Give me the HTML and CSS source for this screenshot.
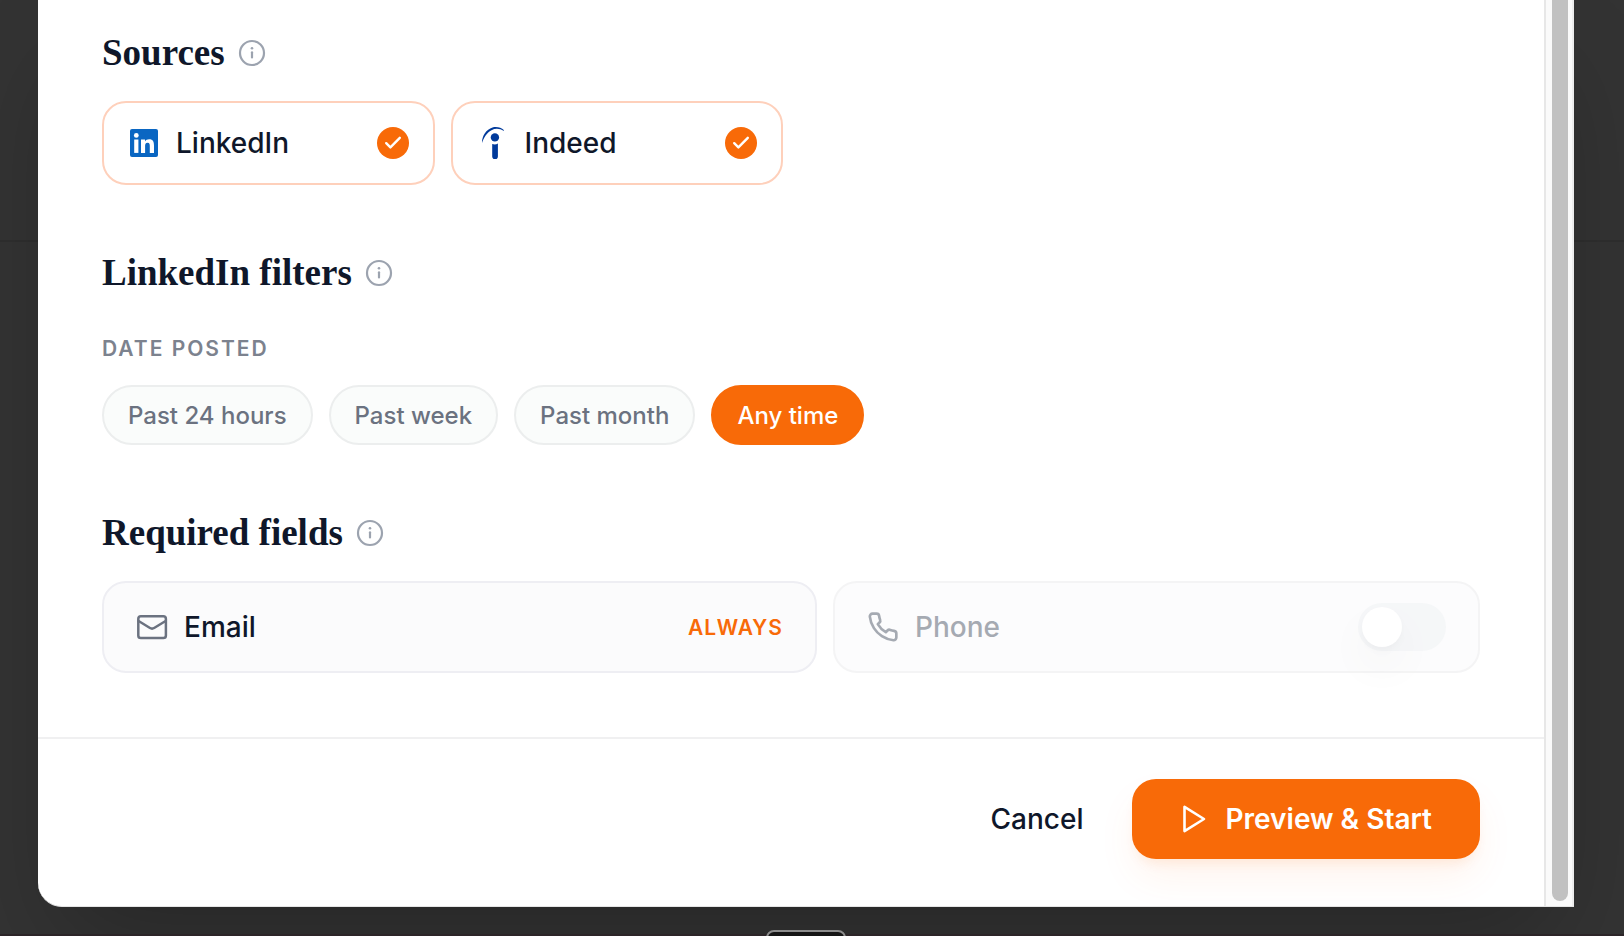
FILE: index.html
```html
<!DOCTYPE html>
<html lang="en">
<head>
<meta charset="utf-8">
<meta name="viewport" content="width=device-width, initial-scale=1">
<title>New search</title>
<link rel="stylesheet" href="styles.css">
</head>
<body>
<svg class="defs" aria-hidden="true">
  <symbol id="info" viewBox="0 0 28 28">
    <circle cx="14" cy="14" r="12" fill="none" stroke="currentColor" stroke-width="2.2"/>
    <path d="M14 13.3v5.2" fill="none" stroke="currentColor" stroke-width="2.2" stroke-linecap="round"/>
    <circle cx="14" cy="9.2" r="1.3" fill="currentColor"/>
  </symbol>
  <symbol id="check" viewBox="0 0 32 32">
    <circle cx="16" cy="16" r="16" fill="#f86a08"/>
    <path d="M9.200 16.200l4.200 4.200 9.400-9.600" fill="none" stroke="#fff" stroke-width="2.400" stroke-linecap="round" stroke-linejoin="round"/>
  </symbol>
</svg>
<div class="backdrop-line"></div>
<main class="dialog" role="dialog" aria-label="Search settings">
  <div class="content">
    <div class="body">
      <section class="section">
        <h2 class="title">Sources <svg class="info"><use href="#info"/></svg></h2>
        <div class="sources">
          <button class="source" type="button" aria-pressed="true">
            <svg class="icon" viewBox="0 0 32 32">
              <rect x="2" y="2" width="28" height="28" rx="2" fill="#0a66c2"/>
              <g fill="#fff"><circle cx="8.3" cy="8.4" r="2.4"/><rect x="6.200" y="12.500" width="4.200" height="13.400"/>
              <path d="M13 12.500h4v1.900c.7-1.300 2.200-2.200 4.100-2.200 4.100 0 4.900 2.700 4.900 6.200v7.500h-4.200v-6.600c0-1.600 0-3.500-2.200-3.500s-2.500 1.700-2.500 3.400v6.700H13z"/></g>
            </svg>
            <span class="name">LinkedIn</span>
            <svg class="icon"><use href="#check"/></svg>
          </button>
          <button class="source" type="button" aria-pressed="true">
            <svg class="icon" viewBox="0 0 32 32" fill="#003a9b">
              <circle cx="17.900" cy="10.400" r="4.200"/>
              <path d="M15.200 17c1.900.8 4.200.6 5.700-.4v12.600c0 1.900-1 3-2.800 3s-2.900-1.100-2.900-3z"/>
              <path d="M5 15.900C4.800 9.300 9.100 2.400 15.500.5c4.400-1.200 8.700.3 11.300 2.400v1c-4-2.500-8.400-2.700-12.300-.7C9.700 5.800 6.900 10.500 5 15.900z"/>
            </svg>
            <span class="name">Indeed</span>
            <svg class="icon"><use href="#check"/></svg>
          </button>
        </div>
      </section>

      <section class="section">
        <h2 class="title">LinkedIn filters <svg class="info"><use href="#info"/></svg></h2>
        <h3 class="label" id="date-posted">Date posted</h3>
        <div class="chips" role="group" aria-labelledby="date-posted">
          <button class="chip" type="button">Past 24 hours</button>
          <button class="chip" type="button">Past week</button>
          <button class="chip" type="button">Past month</button>
          <button class="chip chip-active" type="button" aria-pressed="true">Any time</button>
        </div>
      </section>

      <section class="section">
        <h2 class="title">Required fields <svg class="info"><use href="#info"/></svg></h2>
        <div class="fields">
          <div class="field">
            <svg class="icon icon-muted" viewBox="0 0 32 32"><rect x="2.300" y="5.300" width="27.600" height="21.800" rx="2.600"/><path d="M2.600 10l11.400 7c1.300.8 2.800.8 4.100 0L29.600 10"/></svg>
            <span class="name">Email</span>
            <span class="always">Always</span>
          </div>
          <label class="field field-off" for="phone">
            <svg class="icon icon-muted" viewBox="0 0 24 24"><path class="phone-line" d="M22 16.920v3a2 2 0 0 1-2.180 2 19.790 19.790 0 0 1-8.630-3.070 19.500 19.500 0 0 1-6-6 19.790 19.790 0 0 1-3.070-8.670A2 2 0 0 1 4.110 2h3a2 2 0 0 1 2 1.720c.127.960.361 1.903.700 2.810a2 2 0 0 1-.450 2.110L8.090 9.910a16 16 0 0 0 6 6l1.270-1.270a2 2 0 0 1 2.110-.450c.907.339 1.850.573 2.810.700A2 2 0 0 1 22 16.920z"/></svg>
            <span class="name">Phone</span>
            <input class="toggle" id="phone" type="checkbox" role="switch">
          </label>
        </div>
      </section>
    </div>
    <footer class="footer">
      <button class="cancel" type="button">Cancel</button>
      <button class="start" type="button">
        <svg class="icon" viewBox="0 0 32 32"><path d="M6.500 3.900v24.200L26 16z" fill="none" stroke="#fff" stroke-width="2.600" stroke-linejoin="round"/></svg>
        <span>Preview &amp; Start</span>
      </button>
    </footer>
  </div>
  <div class="track"><div class="thumb"></div></div>
</main>
<div class="page-edge"></div>
<div class="peek"></div>
</body>
</html>
```
FILE: styles.css
```css
* { box-sizing: border-box; }

body {
  margin: 0;
  min-height: 100vh;
  overflow: hidden;
  position: relative;
  background: #333;
  color: #0f172a;
  font-family: Inter, "Liberation Sans", sans-serif;
  font-size: 28px;
  font-weight: 500;
}

button {
  margin: 0;
  font: inherit;
  color: inherit;
  cursor: pointer;
}

.defs { position: absolute; width: 0; height: 0; }

.backdrop-line {
  position: absolute;
  top: 240px;
  left: 0;
  right: 0;
  height: 2px;
  background: #2e2e2e;
}

.dialog {
  position: relative;
  display: flex;
  margin: 0 50px 0 38px;
  background: #fff;
  border-bottom-left-radius: 24px;
  border-bottom: 1px solid #e5e5e5;
  box-shadow: 0 50px 100px -24px rgba(0, 0, 0, 0.25);
}

.content { flex: 1; min-width: 0; }

.body {
  display: flex;
  flex-direction: column;
  gap: 68px;
  padding: 33px 64px 64px;
}

.title {
  display: flex;
  align-items: center;
  gap: 13px;
  margin: 0 0 28px;
  font-family: Georgia, "Liberation Serif", serif;
  font-size: 37px;
  line-height: 40px;
  font-weight: 700;
}

.info { width: 28px; height: 28px; color: #9ca3af; }

.icon { flex: none; width: 32px; height: 32px; }

.icon-muted {
  fill: none;
  stroke: #6b7280;
  stroke-width: 2.5;
  stroke-linecap: round;
  stroke-linejoin: round;
}

.phone-line { stroke-width: 2; }

.name { flex: 1; text-align: left; }

.sources {
  display: grid;
  grid-template-columns: repeat(4, 1fr);
  gap: 16px;
}

.source {
  display: flex;
  align-items: center;
  gap: 16px;
  height: 84px;
  padding: 0 24px;
  background: #fff;
  border: 2px solid #fed0bb;
  border-radius: 24px;
}

.label {
  margin: 42px 0 22px;
  color: #7c828e;
  font-size: 21px;
  line-height: 28px;
  font-weight: 600;
  letter-spacing: 2px;
  text-transform: uppercase;
}

.chips { display: flex; flex-wrap: wrap; gap: 16px; }

.chip {
  height: 60px;
  padding: 0 24px;
  color: #6b7280;
  background: #fafcfb;
  border: 2px solid #eceeee;
  border-radius: 30px;
  font-size: 24px;
}

.chip-active {
  color: #fff;
  background: #f86a08;
  border-color: #f86a08;
}

.fields {
  display: grid;
  grid-template-columns: 715fr 647fr;
  gap: 16px;
}

.field {
  display: flex;
  align-items: center;
  gap: 16px;
  height: 92px;
  padding: 0 32px;
  background: #fbfbfc;
  border: 2px solid #eeeef3;
  border-radius: 24px;
}

.field-off { opacity: 0.6; border-color: #eeeeef; }
.field-off .name { color: #6b7280; }

.always {
  color: #f86a08;
  font-size: 21px;
  font-weight: 600;
  letter-spacing: 1px;
  text-transform: uppercase;
}

.toggle {
  appearance: none;
  flex: none;
  width: 88px;
  height: 48px;
  margin: 0;
  padding: 4px;
  background: #f0f2f5;
  border-radius: 24px;
}

.toggle::before {
  content: "";
  display: block;
  width: 40px;
  height: 40px;
  background: #fff;
  border-radius: 50%;
  box-shadow: 0 20px 40px -4px rgba(0, 0, 0, 0.08), 0 4px 8px -2px rgba(0, 0, 0, 0.06);
}

.toggle:checked { background: #f86a08; }
.toggle:checked::before { margin-left: 40px; }

.footer {
  display: flex;
  justify-content: flex-end;
  align-items: center;
  gap: 16px;
  padding: 40px 64px 47px;
  border-top: 2px solid #f0f0f1;
}

.cancel {
  height: 80px;
  padding: 0 32px;
  background: none;
  border: 0;
}

.start {
  display: flex;
  align-items: center;
  gap: 16px;
  height: 80px;
  padding: 0 48px 0 46px;
  color: #fff;
  background: #f86a08;
  border: 0;
  border-radius: 24px;
  font-weight: 600;
  box-shadow: 0 20px 40px -4px rgba(249, 106, 9, 0.08), 0 8px 12px -4px rgba(249, 106, 9, 0.1);
}

.track {
  display: flex;
  width: 30px;
  padding: 0 4px 5px 6px;
  background: #fafafa;
  border-left: 2px solid #e7e7e7;
  border-right: 2px solid #ededed;
}

.thumb {
  flex: 1;
  background: #c1c1c1;
  border-radius: 0 0 8px 8px;
}

.page-edge {
  position: absolute;
  bottom: 0;
  left: 0;
  right: 0;
  height: 2px;
  background: #2c2528;
}

.peek {
  position: absolute;
  bottom: -34px;
  left: calc(50% - 46px);
  width: 80px;
  height: 40px;
  background: #151515;
  border: 2px solid #8c8c8c;
  border-radius: 8px;
}
```
